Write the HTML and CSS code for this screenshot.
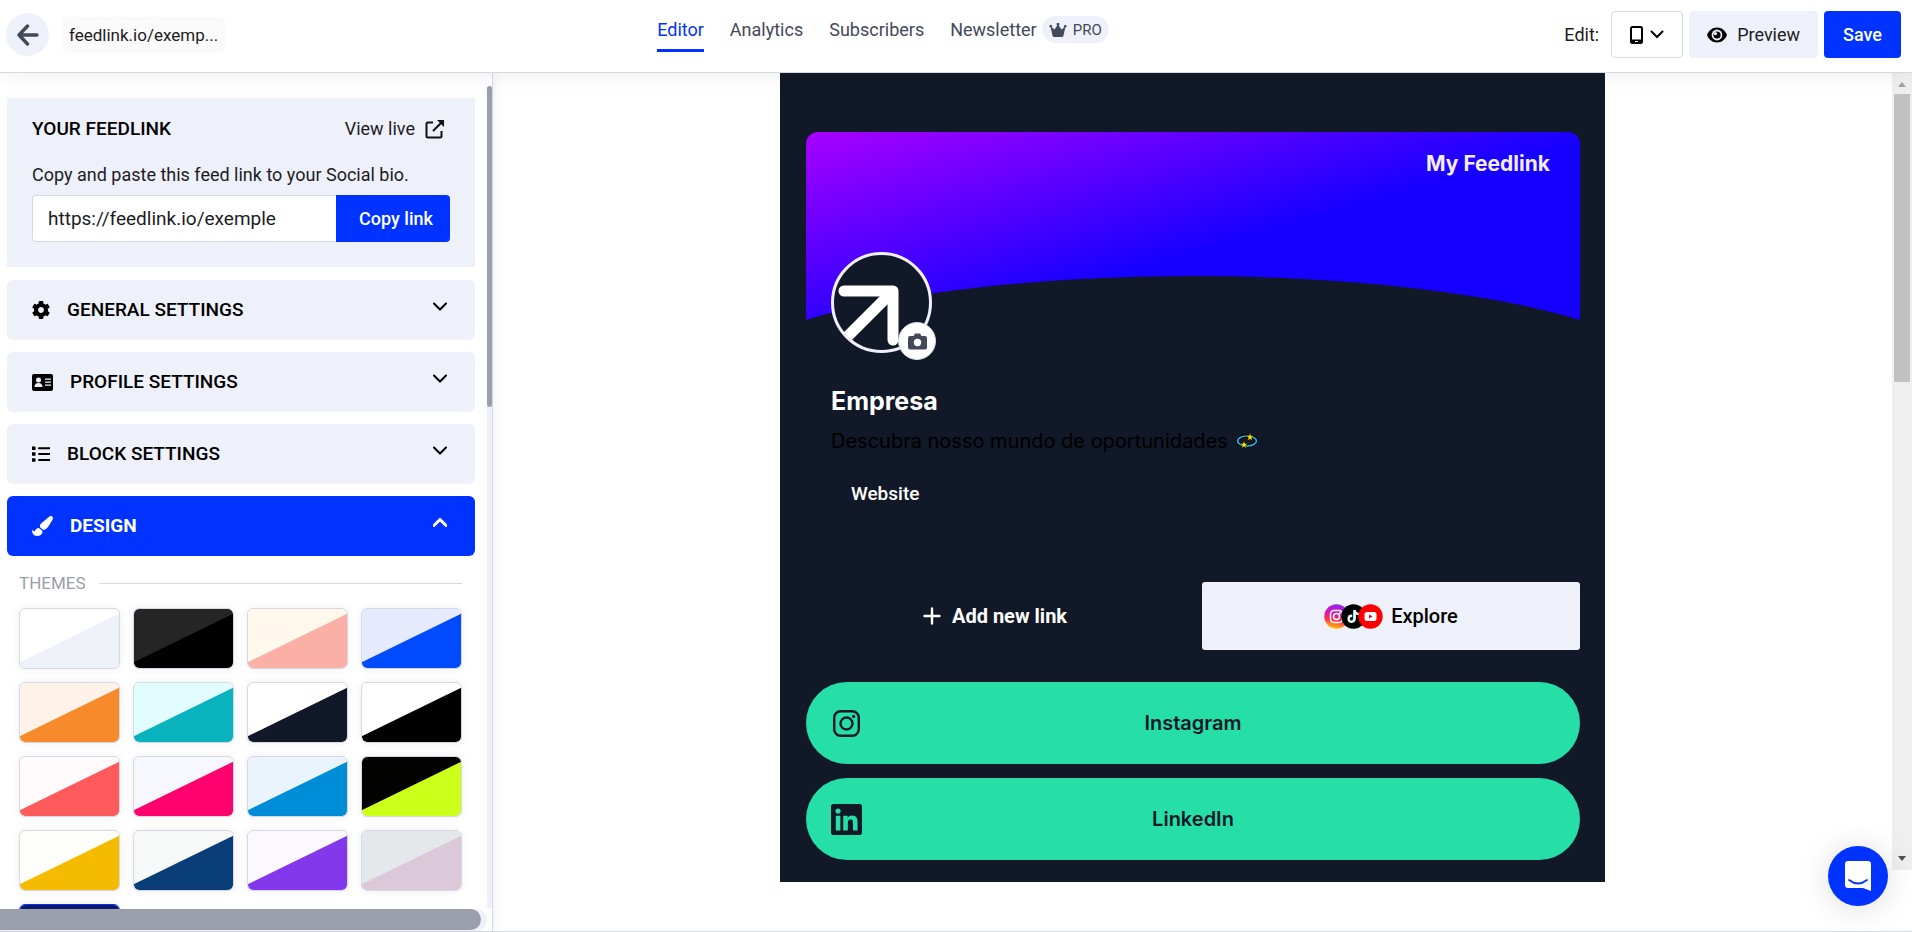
FILE: index.html
```html
<!DOCTYPE html>
<html lang="en">
<head>
  <meta charset="UTF-8" />
  <meta name="viewport" content="width=device-width, initial-scale=1.0"/>
  <title>Feedlink Editor</title>
  <link rel="stylesheet" href="styles.css">
</head>
<body>

  <!-- TOP BAR -->
  <header class="topbar">
    <div class="topbar-left">
      <button class="back-btn" aria-label="Back">
        <svg width="22" height="22" viewBox="0 0 22 22" fill="none" stroke="#43485a" stroke-width="3.4" stroke-linecap="round" stroke-linejoin="round"><path d="M20 11H2.5M10.500 2L2 11l8.500 9"/></svg>
      </button>
      <span class="site-name">feedlink.io/exemp...</span>
    </div>

    <nav class="tabs">
      <a href="#" class="tab active">Editor</a>
      <a href="#" class="tab">Analytics</a>
      <a href="#" class="tab">Subscribers</a>
      <a href="#" class="tab">Newsletter
        <span class="pro">
          <svg width="18" height="14" viewBox="0 0 18 14" fill="#43485a"><path d="M3.500 12.600L1.700 4.500A1.300 1.300 0 1 1 2.600 4.200L5.600 6.600 8.300 2.300A1.400 1.400 0 1 1 9.700 2.300L12.400 6.600 15.400 4.200A1.300 1.300 0 1 1 16.300 4.500L14.500 12.600Q14.300 14 13 14H5Q3.700 14 3.500 12.600Z"/></svg>
          PRO
        </span>
      </a>
    </nav>

    <div class="topbar-right">
      <span class="edit-label">Edit:</span>
      <button class="device-btn" aria-label="Device">
        <svg width="13" height="18" viewBox="0 0 13 18"><rect x="1" y="1" width="11" height="16" rx="1.500" fill="none" stroke="#000" stroke-width="2"/><path d="M1 13.500h11V17H1z"/><rect x="5" y="15" width="3" height="1" fill="#fff"/></svg>
        <svg width="14" height="9" viewBox="0 0 14 9" fill="none" stroke="#000" stroke-width="2" stroke-linecap="round"><path d="M1.500 1.500L7 7l5.500-5.500"/></svg>
      </button>
      <button class="preview-btn">
        <svg width="20" height="16" viewBox="0 0 20 16"><path d="M10 .5C5.500.5 2 3.200 0 8c2 4.800 5.500 7.500 10 7.500S18 12.800 20 8C18 3.200 14.500.5 10 .5z"/><circle cx="10" cy="8" r="5.400" fill="#eef1f9"/><circle cx="10" cy="8" r="3.600"/><circle cx="8.400" cy="6.600" r="1.700" fill="#eef1f9"/></svg>
        Preview
      </button>
      <button class="save-btn">Save</button>
    </div>
  </header>

  <div class="workspace">

    <!-- SIDEBAR -->
    <aside class="sidebar">
      <div class="sidebar-view">
        <div class="sidebar-content">
          <section class="share">
            <div class="share-head">
              <h2>YOUR FEEDLINK</h2>
              <a href="#" class="view-live">View live
                <svg width="19" height="19" viewBox="0 0 19 19" fill="none" stroke="#111" stroke-width="2"><path d="M8 2.500H3A1.500 1.500 0 0 0 1.500 4v12A1.500 1.500 0 0 0 3 17.500h12a1.500 1.500 0 0 0 1.500-1.500v-5M8 11L17 2"/><path d="M12 0h7v7z" fill="#111" stroke="none"/></svg>
              </a>
            </div>
            <label for="feedUrl">Copy and paste this feed link to your Social bio.</label>
            <div class="copy-row">
              <input type="text" id="feedUrl" value="https://feedlink.io/exemple" readonly />
              <button class="copy-btn">Copy link</button>
            </div>
          </section>

          <button class="panel">
            <svg width="18" height="18" viewBox="8 8 496 496"><path d="M487.400 315.700l-42.600-24.600c4.300-23.200 4.300-47 0-70.200l42.600-24.600c4.900-2.800 7.100-8.600 5.500-14-11.100-35.600-30-67.800-54.700-94.600-3.800-4.100-10-5.100-14.800-2.300L380.800 110c-17.900-15.400-38.500-27.300-60.800-35.100V25.800c0-5.600-3.900-10.500-9.400-11.700-36.700-8.200-74.300-7.800-109.200 0-5.500 1.200-9.400 6.100-9.400 11.700V75c-22.200 7.900-42.800 19.800-60.800 35.100L88.700 85.500c-4.900-2.800-11-1.900-14.800 2.300-24.700 26.700-43.600 58.900-54.700 94.600-1.700 5.400.6 11.200 5.500 14L67.300 221c-4.300 23.200-4.300 47 0 70.200l-42.600 24.600c-4.900 2.800-7.100 8.600-5.500 14 11.100 35.600 30 67.800 54.700 94.600 3.800 4.100 10 5.100 14.800 2.300l42.600-24.600c17.900 15.400 38.500 27.300 60.800 35.100v49.200c0 5.600 3.900 10.500 9.400 11.700 36.700 8.200 74.300 7.800 109.200 0 5.500-1.200 9.400-6.100 9.400-11.700v-49.200c22.200-7.900 42.800-19.800 60.800-35.100l42.600 24.600c4.900 2.800 11 1.900 14.800-2.300 24.700-26.700 43.600-58.900 54.700-94.600 1.500-5.500-.7-11.300-5.600-14.100zM256 336c-44.100 0-80-35.900-80-80s35.900-80 80-80 80 35.900 80 80-35.900 80-80 80z"/></svg>
            <span>GENERAL SETTINGS</span>
            <svg class="chevron" width="14" height="9" viewBox="0 0 14 9"><path d="M1 1.500l6 6 6-6"/></svg>
          </button>
          <button class="panel">
            <svg width="21" height="17" viewBox="0 0 21 17"><rect width="21" height="17" rx="2"/><g fill="#eef1f9"><circle cx="6.500" cy="6" r="2.500"/><path d="M2.500 13c0-2.500 1.500-4 4-4s4 1.500 4 4z"/><path d="M13 4.500h6v1.300h-6zM13 7.500h6v1.300h-6zM13 10.500h6v1.300h-6z"/></g></svg>
            <span>PROFILE SETTINGS</span>
            <svg class="chevron" width="14" height="9" viewBox="0 0 14 9"><path d="M1 1.500l6 6 6-6"/></svg>
          </button>
          <button class="panel">
            <svg width="18" height="16" viewBox="0 0 18 16"><path d="M0 .5h3.500V4H0zM0 6.300h3.500v3.500H0zM0 12.200h3.500v3.500H0z"/><path d="M7 2.200h10.500M7 8h10.500M7 14h10.500" stroke="#000" stroke-width="2" stroke-linecap="round"/></svg>
            <span>BLOCK SETTINGS</span>
            <svg class="chevron" width="14" height="9" viewBox="0 0 14 9"><path d="M1 1.500l6 6 6-6"/></svg>
          </button>
          <button class="panel open">
            <svg width="21" height="20" viewBox="0 0 512 512" preserveAspectRatio="none" fill="#fff"><path d="M167.020 309.340c-40.120 2.580-76.530 17.860-97.190 72.300-2.350 6.210-8 9.980-14.590 9.980-11.110 0-45.460-27.670-55.250-34.350C0 439.620 37.930 512 128 512c75.860 0 128-43.770 128-120.190 0-3.110-.65-6.080-.97-9.130l-88.010-73.340zM457.890 0c-15.160 0-29.370 6.710-40.210 16.450C213.270 199.050 192 203.340 192 257.090c0 13.700 3.250 26.760 8.730 38.700l63.820 53.180c7.210 1.800 14.640 3.030 22.390 3.030 62.110 0 98.110-45.470 211.160-256.460 7.380-14.350 13.900-29.850 13.900-45.990C512 20.640 486 0 457.890 0z"/></svg>
            <span>DESIGN</span>
            <svg class="chevron" width="14" height="9" viewBox="0 0 14 9"><path d="M1 7.500l6-6 6 6"/></svg>
          </button>

          <section class="themes">
            <h3>THEMES</h3>
            <div class="theme-grid">
              <button class="theme light" aria-label="Light"></button>
              <button class="theme dark" aria-label="Dark"></button>
              <button class="theme peach" aria-label="Peach"></button>
              <button class="theme blue" aria-label="Blue"></button>
              <button class="theme orange" aria-label="Orange"></button>
              <button class="theme teal" aria-label="Teal"></button>
              <button class="theme navy" aria-label="Navy"></button>
              <button class="theme mono" aria-label="Mono"></button>
              <button class="theme coral" aria-label="Coral"></button>
              <button class="theme pink" aria-label="Pink"></button>
              <button class="theme sky" aria-label="Sky"></button>
              <button class="theme lime" aria-label="Lime"></button>
              <button class="theme yellow" aria-label="Yellow"></button>
              <button class="theme ocean" aria-label="Ocean"></button>
              <button class="theme violet" aria-label="Violet"></button>
              <button class="theme mauve" aria-label="Mauve"></button>
              <button class="theme custom" aria-label="Custom"></button>
            </div>
          </section>
        </div>
        <div class="scroll-y"><div class="scroll-y-thumb"></div></div>
      </div>
      <div class="scroll-x"><div class="scroll-x-thumb"></div></div>
    </aside>

    <!-- PREVIEW -->
    <main class="stage">
      <div class="page">
        <div class="banner">
          <span class="banner-title">My Feedlink</span>
          <svg class="curve" viewBox="0 0 774 43" preserveAspectRatio="none"><path d="M0 43A480 105 0 0 1 774 43V44H0z" fill="#111827"/></svg>
        </div>

        <div class="profile">
          <div class="avatar">
            <svg class="avatar-img" width="101" height="101" viewBox="0 0 101 101">
              <defs><clipPath id="disc"><circle cx="50.500" cy="50.500" r="49"/></clipPath></defs>
              <circle cx="50.500" cy="50.500" r="49" fill="#111827"/>
              <g clip-path="url(#disc)" stroke="#fff" stroke-width="11" stroke-linecap="round" stroke-linejoin="round" fill="none"><path d="M13 39h49v49"/><path d="M60 41L6 95" stroke-linecap="butt"/></g>
              <circle cx="50.500" cy="50.500" r="49" fill="none" stroke="#f1effc" stroke-width="3"/>
            </svg>
            <button class="camera-btn" aria-label="Change photo">
              <svg width="19" height="17" viewBox="0 0 19 17"><path d="M2 3h3.500L7 .5h5L13.500 3H17a2 2 0 0 1 2 2v9.500a2 2 0 0 1-2 2H2a2 2 0 0 1-2-2V5a2 2 0 0 1 2-2z" fill="#43485a"/><circle cx="9.500" cy="9.500" r="3.700" fill="#fff"/></svg>
            </button>
          </div>
          <h1>Empresa</h1>
          <p class="bio">Descubra nosso mundo de oportunidades
            <svg width="22" height="18" viewBox="0 0 22 18"><ellipse cx="11" cy="9" rx="9" ry="5" fill="#111827" stroke="#000" stroke-width="4"/><ellipse cx="11" cy="9" rx="9.500" ry="5" fill="none" stroke="#1fb6e8" stroke-width="1.700"/><path d="M14 1l1 2.800h3l-2.400 1.800.9 3L14 6.900l-2.500 1.700.9-3L10 3.800h3z" fill="#ffe600" stroke="#000" stroke-width=".4"/><path d="M8 9l1 2.500h2.800l-2.200 1.800.8 2.900L8 14.500l-2.400 1.700.8-2.900-2.200-1.800H7z" fill="#ffe600" stroke="#000" stroke-width=".4"/></svg>
          </p>
          <a href="#" class="website">Website</a>
        </div>

        <div class="actions">
          <button class="add-btn">
            <svg width="18" height="18" viewBox="0 0 18 18" stroke="#fff" stroke-width="2.400" stroke-linecap="round"><path d="M9 1.500v15M1.500 9h15"/></svg>
            Add new link
          </button>
          <button class="explore-btn">
            <svg width="59" height="25" viewBox="0 0 59 25">
              <defs>
                <linearGradient id="insta" x1=".6" y1="0" x2=".4" y2="1"><stop offset="0" stop-color="#8a2cf0"/><stop offset=".35" stop-color="#d80fc0"/><stop offset=".65" stop-color="#ff2a55"/><stop offset="1" stop-color="#ffc800"/></linearGradient>
              </defs>
              <circle cx="12.500" cy="12.500" r="12.200" fill="url(#insta)"/>
              <g fill="none" stroke="#fff" stroke-width="1.500"><rect x="6.500" y="6.500" width="12" height="12" rx="3.500"/><circle cx="12.500" cy="12.500" r="3"/></g>
              <circle cx="16" cy="9" r=".9" fill="#fff"/>
              <circle cx="29.500" cy="12.500" r="12.200"/>
              <svg x="23.500" y="6" width="11.500" height="13" viewBox="0 0 448 512"><path transform="translate(-22 -14)" fill="#25f4ee" d="M448,209.910a210.060,210.060,0,0,1-122.770-39.250V349.380A162.550,162.550,0,1,1,185,188.310V278.200a74.620,74.620,0,1,0,52.230,71.180V0l88,0a121.180,121.180,0,0,0,1.860,22.170h0A122.180,122.180,0,0,0,381,102.390a121.430,121.430,0,0,0,67,20.140Z"/><path fill="#fff" d="M448,209.910a210.060,210.060,0,0,1-122.770-39.250V349.380A162.550,162.550,0,1,1,185,188.310V278.200a74.620,74.620,0,1,0,52.230,71.180V0l88,0a121.180,121.180,0,0,0,1.860,22.170h0A122.180,122.180,0,0,0,381,102.390a121.430,121.430,0,0,0,67,20.140Z"/></svg>
              <circle cx="46.500" cy="12.500" r="12.200" fill="#f00"/>
              <rect x="40.500" y="8" width="12" height="9" rx="2.500" fill="#fff"/><path d="M45 10.500v4l3.500-2z" fill="#f00"/>
            </svg>
            Explore
          </button>
        </div>

        <div class="links">
          <a href="#" class="link">
            <svg width="31" height="31" viewBox="0 0 31 31" fill="none" stroke="#111827" stroke-width="2.400"><rect x="3.200" y="3.200" width="24.600" height="24.600" rx="6.500"/><circle cx="15.500" cy="15.500" r="6"/><circle cx="22.600" cy="8.400" r="1.600" fill="#111827" stroke="none"/></svg>
            <span>Instagram</span>
          </a>
          <a href="#" class="link">
            <svg width="31" height="31" viewBox="0 32 448 448" fill="#111827"><path d="M416 32H31.900C14.300 32 0 46.500 0 64.300v383.400C0 465.500 14.300 480 31.900 480H416c17.600 0 32-14.500 32-32.300V64.300c0-17.800-14.400-32.300-32-32.300zM135.400 416H69V202.200h66.500V416zm-33.200-243c-21.300 0-38.500-17.300-38.500-38.500S80.900 96 102.200 96c21.200 0 38.500 17.300 38.500 38.500 0 21.300-17.200 38.500-38.500 38.500zm282.100 243h-66.400V312c0-24.800-.5-56.700-34.500-56.700-34.600 0-39.900 27-39.900 54.900V416h-66.400V202.200h63.700v29.200h.9c8.900-16.800 30.600-34.500 62.900-34.500 67.200 0 79.700 44.300 79.700 101.900V416z"/></svg>
            <span>LinkedIn</span>
          </a>
        </div>
      </div>

      <div class="stage-scroll">
        <svg width="20" height="21" viewBox="0 0 20 21"><path d="M6 14l4-5 4 5z" fill="#a3a3a3"/></svg>
        <div class="stage-thumb"></div>
        <svg width="20" height="21" viewBox="0 0 20 21"><path d="M6 7h8l-4 5z" fill="#505050"/></svg>
      </div>
    </main>
  </div>

  <button class="chat-btn" aria-label="Open chat">
    <svg width="28" height="32" viewBox="0 0 28 32"><path d="M4 1h20a3 3 0 0 1 3 3v27l-8-3H4a3 3 0 0 1-3-3V4a3 3 0 0 1 3-3z" fill="#fff"/><path d="M5 20q9 7 18 0" fill="none" stroke="#0033ff" stroke-width="1.800" stroke-linecap="round"/></svg>
  </button>

</body>
</html>
```

FILE: styles.css
```css
* {
  box-sizing: border-box;
}
body {
  font-family: Roboto, "Liberation Sans", sans-serif;
  font-size: 18px;
  line-height: 24px;
  color: #1c1c1f;
  background: #fff;
  margin: 0;
  height: 100vh;
  display: flex;
  flex-direction: column;
  overflow: hidden;
}
button, input {
  font: inherit;
  color: inherit;
}
button {
  border: none;
  padding: 0;
  cursor: pointer;
}
a {
  color: inherit;
  text-decoration: none;
}
svg {
  flex: none;
}
h1, h2, h3, p {
  margin: 0;
}

/* top bar */
.topbar {
  display: grid;
  grid-template-columns: 9fr auto 11fr;
  height: 73px;
  flex: none;
  border-bottom: 1px solid #d5d8e5;
  box-shadow: 0 0 24px rgba(0,0,0,0.08);
  background: #fff;
  position: relative;
  z-index: 2;
}
.topbar-left {
  display: flex;
  align-items: center;
  gap: 13px;
  padding: 0 0 3px 6px;
}
.back-btn {
  width: 43px;
  height: 43px;
  border-radius: 50%;
  background: #eef1f9;
  display: flex;
  align-items: center;
  justify-content: center;
}
.site-name {
  background: #fafafa;
  border-radius: 6px;
  padding: 6px 7px;
  font-size: 17px;
}
.tabs {
  display: flex;
  gap: 26px;
  padding-top: 16px;
}
.tab {
  display: flex;
  gap: 5px;
  height: 36px;
  line-height: 28px;
  color: #43485a;
  border-bottom: 3px solid transparent;
}
.tab.active {
  color: #0033ff;
  border-color: #0033ff;
}
.pro {
  display: flex;
  align-items: center;
  gap: 6px;
  height: 27px;
  padding: 0 7px;
  border-radius: 14px;
  background: #eef1f9;
  font-size: 15px;
}
.topbar-right {
  display: flex;
  align-items: center;
  justify-content: flex-end;
  gap: 6px;
  padding: 0 11px 3px 0;
}
.edit-label {
  margin-right: 6px;
}
.device-btn, .preview-btn, .save-btn {
  height: 47px;
  border-radius: 4px;
  display: flex;
  align-items: center;
  justify-content: center;
}
.device-btn {
  width: 72px;
  gap: 7px;
  background: #fff;
  border: 1px solid #d5d8e5;
}
.preview-btn {
  padding: 0 18px;
  gap: 10px;
  background: #eef1f9;
}
.save-btn {
  padding: 0 19px;
  background: #0033ff;
  color: #fff;
  font-weight: 500;
}

/* sidebar */
.workspace {
  display: flex;
  flex: 1;
  min-height: 0;
  border-bottom: 1px solid #d5d8e5;
}
.sidebar {
  width: 493px;
  flex: none;
  display: flex;
  flex-direction: column;
  border-right: 1px solid #d5d8e5;
  box-shadow: 0 0 12px rgba(0,0,0,0.08);
}
.sidebar-view {
  display: flex;
  flex: 1;
  min-height: 0;
}
.sidebar-content {
  flex: 1;
  overflow: hidden;
  padding: 25px 12px 0 7px;
}
.share {
  background: #eef1f9;
  padding: 19px 25px 25px;
  margin-bottom: 13px;
}
.share-head {
  display: flex;
  justify-content: space-between;
  margin-bottom: 22px;
}
.share-head h2 {
  font-size: 19px;
  font-weight: 500;
  color: #000;
}
.view-live {
  display: flex;
  align-items: center;
  gap: 10px;
  padding-right: 6px;
}
.share label {
  display: block;
  margin-bottom: 8px;
}
.copy-row {
  display: flex;
  height: 47px;
}
.copy-row input {
  flex: 1;
  min-width: 0;
  padding: 0 15px;
  background: #fff;
  border: 1px solid #d5d8e5;
  border-right: none;
  border-radius: 4px 0 0 4px;
  font-size: 19px;
}
.copy-btn {
  width: 114px;
  padding-left: 6px;
  background: #0033ff;
  color: #fff;
  font-weight: 500;
  border-radius: 0 4px 4px 0;
}
.panel {
  display: flex;
  align-items: center;
  gap: 17px;
  width: 100%;
  height: 60px;
  margin-bottom: 12px;
  padding: 0 28px 0 25px;
  border-radius: 6px;
  background: #eef1f9;
  color: #000;
  font-size: 19px;
  font-weight: 500;
}
.panel.open {
  background: #0033ff;
  color: #fff;
  font-weight: 700;
}
.chevron {
  margin: 0 0 8px auto;
  fill: none;
  stroke: #000;
  stroke-width: 2;
  stroke-linecap: round;
}
.open .chevron {
  stroke: #fff;
  stroke-width: 3;
}
.themes {
  padding: 3px 13px 0 12px;
}
.themes h3 {
  display: flex;
  align-items: center;
  gap: 13px;
  margin-bottom: 13px;
  font-size: 17px;
  font-weight: 400;
  color: #9a9eab;
}
.themes h3::after {
  content: "";
  flex: 1;
  height: 1px;
  background: #d5d8e5;
}
.theme-grid {
  display: grid;
  grid-template-columns: repeat(4, 1fr);
  gap: 13px;
}
.theme {
  height: 61px;
  border: 1px solid #d5d8e5;
  border-radius: 6px;
  box-shadow: 0 0 10px rgba(0,0,0,0.07);
  background: linear-gradient(154deg, var(--top) 49%, var(--base) 50%) padding-box;
}
.light { --top: #fff; --base: #eef1f8; }
.dark { --top: #252525; --base: #000; }
.peach { --top: #fff8eb; --base: #fbb0a7; }
.blue { --top: #e5eaff; --base: #004bff; }
.orange { --top: #fff3e9; --base: #f78a2a; }
.teal { --top: #e1fdff; --base: #09b3bd; }
.navy { --top: #fff; --base: #111827; }
.mono { --top: #fff; --base: #000; }
.coral { --top: #fffafb; --base: #ff5b5c; }
.pink { --top: #f7f8ff; --base: #ff006e; }
.sky { --top: #eaf4fd; --base: #008dd7; }
.lime { --top: #020300; --base: #ccff1a; }
.yellow { --top: #fefffa; --base: #f5bb00; }
.ocean { --top: #f6f9f8; --base: #083d77; }
.violet { --top: #fbf9ff; --base: #8338ec; }
.mauve { --top: #e4e8ea; --base: #dbc8d9; }
.custom {
  --top: #0b1a66;
  --base: #0b1a66;
  border-color: #0033ff;
}
.scroll-y {
  width: 5px;
  margin-top: 13px;
  border-radius: 3px;
  background: #eef1f9;
}
.scroll-y-thumb {
  height: 39%;
  border-radius: 3px;
  background: #9b9fac;
}
.scroll-x {
  height: 22px;
  margin-right: 5px;
  border-radius: 0 11px 11px 0;
  background: #eef1f9;
}
.scroll-x-thumb {
  width: 481px;
  height: 21px;
  border-radius: 0 11px 11px 0;
  background: #9b9fac;
}

/* preview */
.stage {
  flex: 1;
  display: flex;
  justify-content: center;
  align-items: flex-start;
  position: relative;
  padding-right: 1px;
}
.page {
  width: 825px;
  padding: 59px 25px 22px 26px;
  background: #111827;
  font-family: Inter, "Liberation Sans", sans-serif;
}
.banner {
  height: 188px;
  display: flex;
  flex-direction: column;
  justify-content: space-between;
  border-radius: 12px 12px 0 0;
  background: linear-gradient(164deg, #a800ff, #1500ff 57%);
}
.banner-title {
  align-self: flex-end;
  padding: 20px 30px;
  font-size: 21px;
  font-weight: 700;
  color: #f3edff;
}
.curve {
  width: 100%;
  height: 44px;
}
.profile {
  padding: 0 25px;
}
.avatar {
  position: relative;
  width: 101px;
  height: 101px;
  margin-top: -68px;
}
.camera-btn {
  position: absolute;
  right: -4px;
  bottom: -7px;
  width: 38px;
  height: 38px;
  border-radius: 50%;
  border: 1px solid #d5d8e5;
  background: #fff;
  display: flex;
  align-items: center;
  justify-content: center;
}
.profile h1 {
  margin-top: 32px;
  font-size: 25px;
  line-height: 32px;
  font-weight: 700;
  color: #fff;
}
.bio {
  display: flex;
  align-items: center;
  gap: 8px;
  margin-top: 12px;
  font-size: 20px;
  line-height: 24px;
  color: #000;
}
.website {
  display: inline-block;
  margin-top: 29px;
  padding: 0 20px;
  font-family: Roboto, sans-serif;
  font-size: 19px;
  font-weight: 500;
  color: #fff;
}
.actions {
  display: grid;
  grid-template-columns: 1fr 1fr;
  gap: 18px;
  margin: 76px 0 32px;
}
.add-btn, .explore-btn {
  display: flex;
  align-items: center;
  justify-content: center;
  height: 68px;
  border-radius: 3px;
  font-family: Roboto, sans-serif;
  font-size: 20px;
  font-weight: 500;
}
.add-btn {
  gap: 11px;
  background: none;
  color: #fff;
  font-weight: 700;
}
.explore-btn {
  gap: 8px;
  background: #eef1f9;
  color: #000;
}
.links {
  display: grid;
  gap: 14px;
}
.link {
  display: grid;
  grid-template-columns: 31px 1fr 31px;
  align-items: center;
  height: 82px;
  padding: 0 25px;
  border-radius: 41px;
  background: #26dfa7;
  color: #111827;
  font-size: 20px;
  font-weight: 600;
  text-align: center;
}
.stage {
  padding-right: 20px;
}
.stage-scroll {
  position: absolute;
  top: 0;
  right: 0;
  width: 20px;
  height: 797px;
  display: flex;
  flex-direction: column;
  background: #efefef;
}
.stage-thumb {
  width: 16px;
  height: 288px;
  margin: 0 2px auto;
  background: #c1c1c1;
}
.chat-btn {
  position: fixed;
  right: 24px;
  bottom: 26px;
  width: 60px;
  height: 60px;
  border-radius: 50%;
  background: #0033ff;
  box-shadow: 0 2px 32px rgba(0,0,0,0.14);
  display: flex;
  align-items: center;
  justify-content: center;
  z-index: 3;
}
```
